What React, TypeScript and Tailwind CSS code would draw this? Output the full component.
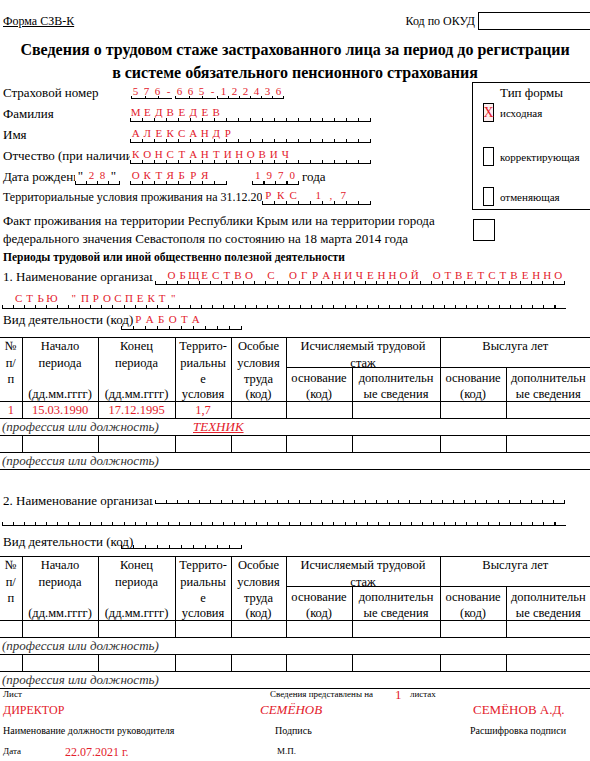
import type { ReactNode } from 'react';

const red = 'text-[#e3202b]';

// tick patterns for the comb fields (period = cell width)
const T11 = 'bg-[image:repeating-linear-gradient(90deg,#000_0_1px,transparent_1px_11px)]';
const T1105 = 'bg-[image:repeating-linear-gradient(90deg,#000_0_1px,transparent_1px_11.05px)]';
const T115 = 'bg-[image:repeating-linear-gradient(90deg,#000_0_1px,transparent_1px_11.5px)]';
const T12 = 'bg-[image:repeating-linear-gradient(90deg,#000_0_1px,transparent_1px_12px)]';
const T135 = 'bg-[image:repeating-linear-gradient(90deg,#000_0_1px,transparent_1px_13.5px)]';

interface CombProps {
  text?: string;
  cell?: string;
  tick?: string;
  className?: string;
  children?: ReactNode;
}

/**
 * Поле-«гребёнка»: нижняя линия с засечками, буквы по клеткам
 */
function Comb({ text = '', cell = 'w-[11.5px]', tick = T12, className = '', children }: CombProps) {
  return (
    <div
      className={`flex shrink-0 items-center border-b border-black bg-bottom bg-no-repeat bg-[length:100%_3px] ${tick} ${className}`}
    >
      {children ?? <Chars text={text} cell={cell} />}
    </div>
  );
}

function Chars({ text, cell }: { text: string; cell: string }) {
  return (
    <>
      {Array.from(text).map((ch, i) => (
        <span key={i} className={`${cell} shrink-0 text-center text-[11px] leading-none ${red}`}>
          {ch === ' ' ? '\u00a0' : ch}
        </span>
      ))}
    </>
  );
}

function Row({
  label,
  labelW = 'w-[130px]',
  labelSize = 'text-[13px]',
  children,
}: {
  label: string;
  labelW?: string;
  labelSize?: string;
  children: ReactNode;
}) {
  return (
    <div className="flex h-[21px] items-start">
      <div className={`${labelW} ${labelSize} shrink-0 overflow-hidden whitespace-nowrap pl-[3px] leading-[21px]`}>
        {label}
      </div>
      {children}
    </div>
  );
}

function CheckRow({ label, checked, className }: { label: string; checked?: boolean; className: string }) {
  return (
    <div className={`flex items-center pl-[10px] ${className}`}>
      <div
        className={`flex h-[19px] w-[11px] items-center justify-center border border-black text-[14px] leading-none ${
          checked ? 'bg-[#fdeeee] text-[#e3202b]' : ''
        }`}
      >
        {checked ? 'X' : ''}
      </div>
      <span className="ml-[6px] pt-[2px] text-[11px]">{label}</span>
    </div>
  );
}

const cellR = 'border-r border-b border-black p-0 align-top';
const cellL = 'border-b border-black p-0 align-top';

function HeadLines({ lines }: { lines: string[] }) {
  const last = lines.length === 4 ? lines[3] : null;
  return (
    <div className="flex h-[63px] flex-col justify-between">
      <div>
        {lines.slice(0, 3).map((l, i) => (
          <div key={i} className="leading-[16.5px]">
            {l || '\u00a0'}
          </div>
        ))}
      </div>
      {last && <div className="leading-[13px]">{last}</div>}
    </div>
  );
}

interface PeriodRow {
  n: string;
  from: string;
  to: string;
  terr: string;
  job?: string;
}

function DataRow({ row }: { row?: PeriodRow }) {
  const vals = row ? [row.n, row.from, row.to, row.terr, '', '', '', '', ''] : Array(9).fill('');
  return (
    <tr>
      {vals.map((v, i) => (
        <td key={i} className={i === 8 ? cellL : cellR}>
          <div className={`h-[16px] text-center leading-[16px] ${red}`}>{v}</div>
        </td>
      ))}
    </tr>
  );
}

function JobRow({ job }: { job?: string }) {
  return (
    <tr>
      <td colSpan={3} className={cellL}>
        <div className="h-[16px] whitespace-nowrap pl-[2px] text-[13px] italic leading-[16px] text-[#333]">
          (профессия или должность)
        </div>
      </td>
      <td colSpan={6} className={cellL}>
        <div className={`h-[16px] whitespace-nowrap pl-[18px] text-[13px] italic leading-[16px] ${red}`}>
          {job && <span className="underline">{job}</span>}
        </div>
      </td>
    </tr>
  );
}

function PeriodPair({ row }: { row?: PeriodRow }) {
  return (
    <>
      <DataRow row={row} />
      <JobRow job={row?.job} />
    </>
  );
}

function PeriodTable({ rows }: { rows: (PeriodRow | undefined)[] }) {
  return (
    <table className="w-[590px] table-fixed border-collapse border-t border-black text-[12.5px]">
      <colgroup>
        <col className="w-[22px]" />
        <col className="w-[76px]" />
        <col className="w-[77px]" />
        <col className="w-[56px]" />
        <col className="w-[55px]" />
        <col className="w-[66px]" />
        <col className="w-[88px]" />
        <col className="w-[66px]" />
        <col className="w-[84px]" />
      </colgroup>
      <tbody>
        <tr>
          <td rowSpan={2} className={`${cellR} text-center`}>
            <HeadLines lines={['№', 'п/', 'п']} />
          </td>
          <td rowSpan={2} className={`${cellR} text-center`}>
            <HeadLines lines={['Начало', 'периода', '', '(дд.мм.гггг)']} />
          </td>
          <td rowSpan={2} className={`${cellR} text-center`}>
            <HeadLines lines={['Конец', 'периода', '', '(дд.мм.гггг)']} />
          </td>
          <td rowSpan={2} className={`${cellR} text-center`}>
            <HeadLines lines={['Террито-', 'риальны', 'е', 'условия']} />
          </td>
          <td rowSpan={2} className={`${cellR} text-center`}>
            <HeadLines lines={['Особые', 'условия', 'труда', '(код)']} />
          </td>
          <td colSpan={2} className={`${cellR} text-center`}>
            <div className="h-[29px] leading-[16.5px]">
              <div>Исчисляемый трудовой</div>
              <div>стаж</div>
            </div>
          </td>
          <td colSpan={2} className={`${cellL} text-center`}>
            <div className="h-[29px] leading-[16.5px]">Выслуга лет</div>
          </td>
        </tr>
        <tr>
          {['основание|(код)', 'дополнительн|ые сведения', 'основание|(код)', 'дополнительн|ые сведения'].map((t, i) => {
            const [a, b] = t.split('|');
            return (
              <td key={i} className={`${i === 3 ? cellL : cellR} text-center`}>
                <div className="flex h-[33px] flex-col justify-between pt-[2px]">
                  <div className="leading-[16.5px]">{a}</div>
                  <div className="leading-[13px]">{b}</div>
                </div>
              </td>
            );
          })}
        </tr>
        {rows.map((r, i) => (
          <PeriodPair key={i} row={r} />
        ))}
      </tbody>
    </table>
  );
}

function OrgBlock({
  num,
  line1 = '',
  line2 = '',
  kind = '',
  compact,
}: {
  num: string;
  line1?: string;
  line2?: string;
  kind?: string;
  compact?: boolean;
}) {
  return (
    <div className="text-[13px]">
      <div className={`flex items-start ${compact ? 'h-[15px]' : 'h-[21px]'}`}>
        <div className="w-[153px] shrink-0 overflow-hidden whitespace-nowrap pl-[3px] leading-[21px]">
          {num}. Наименование организации
        </div>
        <Comb
          text={line1}
          cell="w-[11.05px]"
          tick={T1105}
          className={`ml-[2px] w-[410px] ${compact ? 'h-[14px]' : 'h-[19px]'}`}
        />
      </div>
      <div className={`flex ${compact ? 'mt-0' : 'mt-[1px]'}`}>
        <Comb text={line2} cell="w-[11.05px]" tick={T1105} className="ml-[2px] h-[21px] w-[564px]" />
      </div>
      <div className={`flex items-start ${compact ? 'h-[24px]' : 'h-[22px]'}`}>
        <div
          className={`w-[121px] shrink-0 whitespace-nowrap pl-[3px] leading-[21px] ${compact ? 'mt-[5px]' : 'mt-0'}`}
        >
          Вид деятельности (код)
        </div>
        <Comb text={kind} cell="w-[11.5px]" tick={T12} className={`w-[121px] ${compact ? 'h-[23px]' : 'h-[21px]'}`} />
      </div>
    </div>
  );
}

export default function App() {
  return (
    <div className="w-[590px] overflow-hidden bg-white font-[family-name:'Liberation_Serif','Times_New_Roman',serif] text-[13px] text-black">
      {/* шапка */}
      <div className="mt-[12px] flex h-[18px] items-center justify-between text-[12px]">
        <span className="pl-[3px] underline">Форма СЗВ-К</span>
        <div className="flex items-center">
          <span>Код по ОКУД</span>
          <div className="ml-[3px] h-[18px] w-[112px] border-y border-l border-black" />
        </div>
      </div>

      <h1 className="mt-[8px] text-center text-[16px] font-bold leading-[23px]">
        Сведения о трудовом стаже застрахованного лица за период до регистрации
        <br />в системе обязательного пенсионного страхования
      </h1>

      {/* личные данные + тип формы */}
      <div className="-mt-[2px] flex">
        <div className="w-[472px] shrink-0">
          <Row label="Страховой номер">
            <div className="flex flex-col pt-[4px]">
              <div className="flex h-[10px] items-center">
                <Chars text="576-665-122436" cell="w-[11px]" />
              </div>
              <div className="flex">
                <Comb tick={T135} className="ml-[1px] h-[3px] w-[41px]" />
                <Comb tick={T135} className="ml-[3px] h-[3px] w-[41px]" />
                <Comb tick={T11} className="ml-[1px] h-[3px] w-[67px]" />
              </div>
            </div>
          </Row>
          <Row label="Фамилия">
            <Comb text="МЕДВЕДЕВ" className="h-[19px] w-[241px]" />
          </Row>
          <Row label="Имя">
            <Comb text="АЛЕКСАНДР" className="h-[19px] w-[241px]" />
          </Row>
          <Row label="Отчество (при наличии)">
            <Comb text="КОНСТАНТИНОВИЧ" className="h-[19px] w-[241px]" />
          </Row>
          <Row label="Дата рождения" labelW="w-[75px]">
            <Comb tick={T11} className="h-[19px] w-[45px]">
              <span className="w-[11px] shrink-0 text-center leading-none">"</span>
              <Chars text="28" cell="w-[11px]" />
              <span className="w-[11px] shrink-0 text-center leading-none">"</span>
            </Comb>
            <Comb text="ОКТЯБРЯ" className="ml-[10px] h-[19px] w-[97px]" />
            <Comb text="1970" tick={T115} className="ml-[25px] h-[19px] w-[47px]" />
            <span className="ml-[3px] leading-[21px]">года</span>
          </Row>
          <Row label="Территориальные условия проживания на 31.12.20" labelW="w-[262px]" labelSize="text-[12px]">
            <Comb text="РКС 1,7" cell="w-[12.5px]" className="h-[18px] w-[109px]" />
          </Row>
        </div>
        <div className="h-[128px] flex-1 border-y border-l border-black">
          <div className="pt-[1px] text-center text-[13px] leading-[17px]">Тип формы</div>
          <CheckRow label="исходная" checked className="mt-[2px]" />
          <CheckRow label="корректирующая" className="mt-[25px]" />
          <CheckRow label="отменяющая" className="mt-[21px]" />
        </div>
      </div>

      {/* Крым */}
      <div className="mt-[2px] flex">
        <p className="w-[473px] shrink-0 pl-[3px] leading-[18px]">
          Факт проживания на территории Республики Крым или на территории города
          <br />
          федерального значения Севастополя по состоянию на 18 марта 2014 года
        </p>
        <div className="mt-[7px] h-[22px] w-[22px] border border-black" />
      </div>

      <div className="pl-[3px] text-[11.5px] font-bold leading-[18px]">
        Периоды трудовой или иной общественно полезной деятельности
      </div>

      <OrgBlock num="1" line1=" ОБЩЕСТВО С ОГРАНИЧЕННОЙ ОТВЕТСТВЕННО" line2=' СТЬЮ "ПРОСПЕКТ"' kind=" РАБОТА" />

      <div className="mt-[6px]">
        <PeriodTable
          rows={[{ n: '1', from: '15.03.1990', to: '17.12.1995', terr: '1,7', job: 'ТЕХНИК' }, undefined]}
        />
      </div>

      <div className="mt-[20px]">
        <OrgBlock num="2" compact />
      </div>

      <div className="mt-[6px]">
        <PeriodTable rows={[undefined, undefined]} />
      </div>

      {/* подписи */}
      <div className="flex h-[12px] items-center text-[9px]">
        <span className="w-[270px] shrink-0 pl-[3px]">Лист</span>
        <span className="w-[125px] shrink-0">Сведения представлены на</span>
        <span className={`w-[15px] shrink-0 text-[13px] ${red}`}>1</span>
        <span>листах</span>
      </div>
      <div className={`flex h-[18px] items-center text-[13px] ${red}`}>
        <span className="w-[260px] shrink-0 pl-[3px] text-[12px]">ДИРЕКТОР</span>
        <span className="w-[213px] shrink-0 italic">СЕМЁНОВ</span>
        <span>СЕМЁНОВ А.Д.</span>
      </div>
      <div className="flex h-[22px] items-center text-[10px]">
        <span className="w-[275px] shrink-0 pl-[3px]">Наименование должности руководителя</span>
        <span className="w-[195px] shrink-0">Подпись</span>
        <span>Расшифровка подписи</span>
      </div>
      <div className="flex h-[22px] items-center text-[9px]">
        <span className="w-[65px] shrink-0 pl-[3px]">Дата</span>
        <span className={`w-[212px] shrink-0 text-[12px] ${red}`}>22.07.2021 г.</span>
        <span>М.П.</span>
      </div>
    </div>
  );
}
